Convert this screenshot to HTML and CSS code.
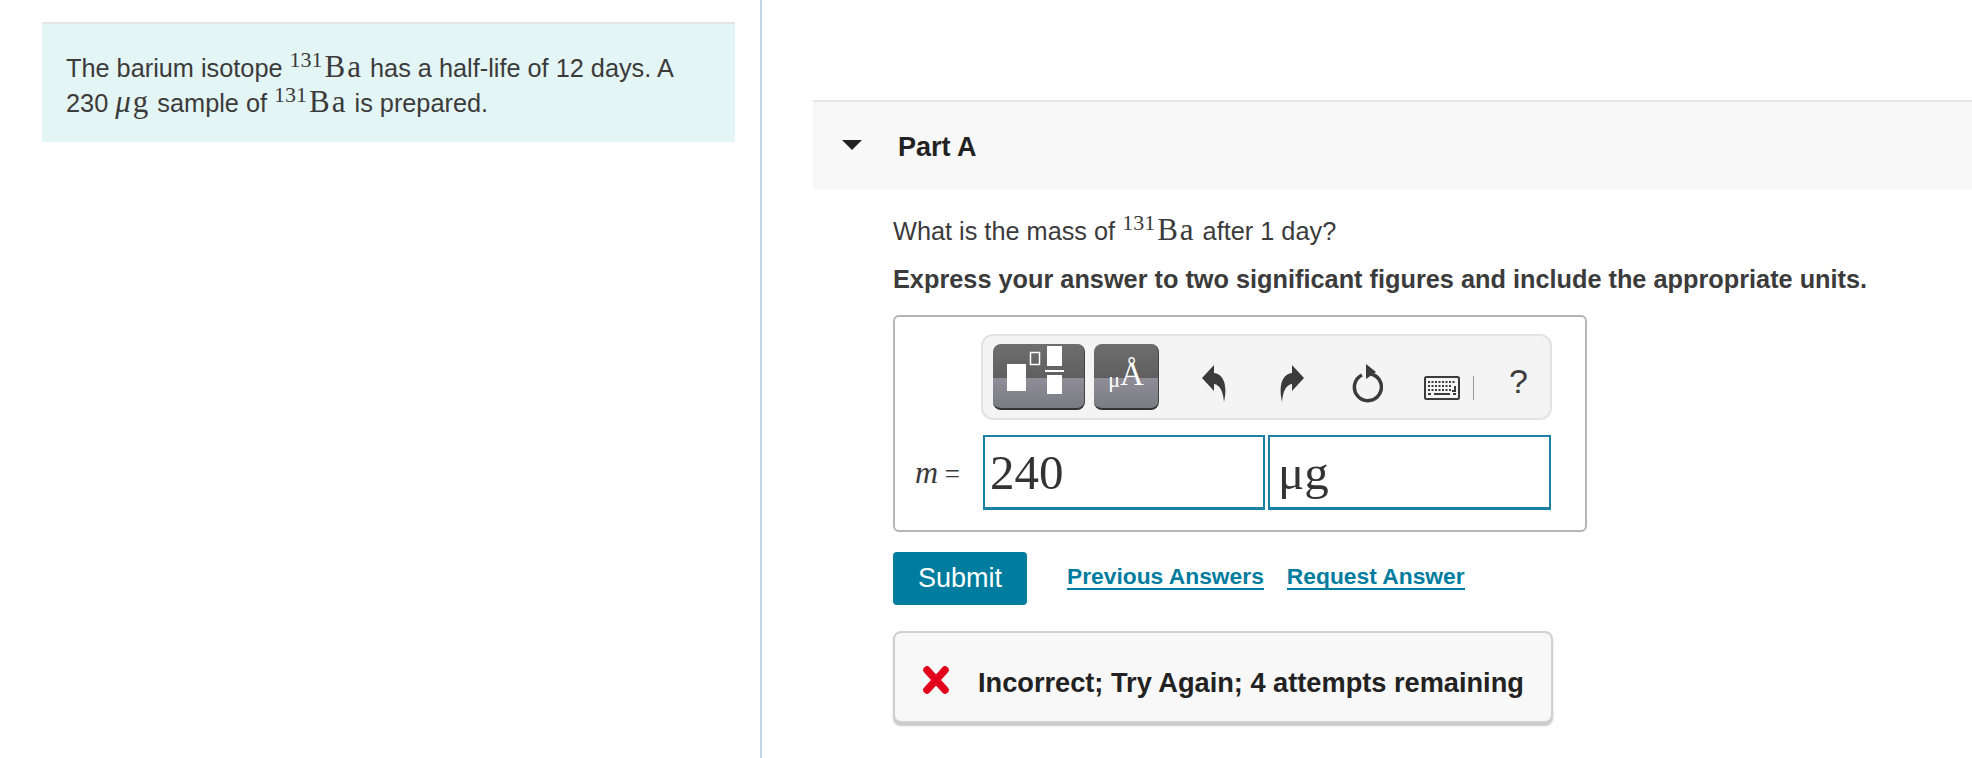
FILE: index.html
```html
<!DOCTYPE html>
<html lang="en">
<head>
  <meta charset="UTF-8">
  <title>Part A</title>
  <link rel="stylesheet" href="styles.css">
</head>
<body>
  <div class="page">
    <div class="left-col">
      <div class="intro">
        The barium isotope <span class="math"><sup>131</sup>Ba</span> has a half-life of 12 days. A
        230 <span class="math"><i>μ</i>g</span> sample of <span class="math"><sup>131</sup>Ba</span> is prepared.
      </div>
    </div>

    <div class="right-col">
      <div class="part-head">
        <span class="arrow"></span>
        <h3>Part A</h3>
      </div>

      <div class="part-body">
        <p class="question">What is the mass of <span class="math"><sup>131</sup>Ba</span> after 1 day?</p>
        <p class="instruction">Express your answer to two significant figures and include the appropriate units.</p>

        <div class="answer-box">
          <div class="toolbar">
            <div class="tool-btn tool-templates">
              <svg width="91" height="64" viewBox="0 0 91 64">
                <rect x="14" y="20" width="19" height="27" fill="#fff"/>
                <rect x="37.500" y="8.500" width="9" height="12" fill="none" stroke="#fff" stroke-width="1.500"/>
                <rect x="54" y="2" width="15" height="20" fill="#fff"/>
                <rect x="52" y="26" width="19" height="2" fill="#fff"/>
                <rect x="54" y="31" width="15" height="19" fill="#fff"/>
              </svg>
            </div>
            <div class="tool-btn tool-symbols"><span class="mu">μ</span><span class="ang">Å</span></div>

            <svg class="tool-icon undo" width="26" height="40" viewBox="0 0 26 40">
              <path fill="#3b3b3b" d="M1 14 L13 1 L13 9 C22 10 27 20 23 38 C22 27 19 21 13 20 L13 27 Z"/>
            </svg>
            <svg class="tool-icon redo" width="26" height="40" viewBox="0 0 26 40">
              <path fill="#3b3b3b" d="M25 14 L13 1 L13 9 C4 10 -1 20 3 38 C4 27 7 21 13 20 L13 27 Z"/>
            </svg>
            <svg class="tool-icon reset" width="32" height="44" viewBox="0 0 32 44">
              <path fill="none" stroke="#3b3b3b" stroke-width="3.500" d="M11 14 A13.500 13.500 0 1 0 20 13"/>
              <path fill="#3b3b3b" d="M15 3 L25 11 L15 18 Z"/>
            </svg>
            <svg class="tool-icon keyboard" width="36" height="24" viewBox="0 0 36 24">
              <rect x="1" y="1" width="34" height="22" rx="1.500" fill="#f4f4f4" stroke="#3b3b3b" stroke-width="2"/>
              <path stroke="#3b3b3b" stroke-width="2" stroke-dasharray="2 1.500" fill="none" d="M4 6 H32 M4 10 H28 M4 14 H28"/>
              <path stroke="#3b3b3b" stroke-width="2" fill="none" d="M10 18 H26 M31 10 V15 H28 M4 18 H7 M29 18 H32"/>
            </svg>
            <span class="tool-sep"></span>
            <span class="tool-help">?</span>
          </div>

          <div class="input-row">
            <span class="var-label"><i>m</i> =</span>
            <div class="answer-input">240</div>
            <div class="answer-input">μg</div>
          </div>
        </div>

        <div class="actions">
          <button class="submit" type="button">Submit</button>
          <a class="link first" href="#">Previous Answers</a>
          <a class="link" href="#">Request Answer</a>
        </div>

        <div class="feedback">
          <svg width="28" height="28" viewBox="0 0 28 28">
            <path fill="none" stroke="#e2001a" stroke-width="7.500" stroke-linecap="round" d="M5 4 L23 24 M23 4 L5 24"/>
          </svg>
          <span>Incorrect; Try Again; 4 attempts remaining</span>
        </div>
      </div>
    </div>
  </div>
</body>
</html>
```

FILE: styles.css
```css
* {
  box-sizing: border-box;
}
html, body {
  margin: 0;
  height: 100%;
  overflow: hidden;
}
body {
  font-family: "Liberation Sans", Arial, sans-serif;
  font-size: 25.300px;
  color: #3b3b3b;
  background: #fff;
}
.page {
  display: flex;
  height: 758px;
}
.left-col {
  width: 762px;
  padding: 22px 0 0 42px;
  border-right: 2px solid #c5d8ea;
}
.intro {
  width: 693px;
  height: 120px;
  padding: 26px 24px 0;
  line-height: 34px;
  background: #e4f5f5;
  border-top: 2px solid #e4e4e4;
}
.math {
  font-family: "Liberation Serif", serif;
  font-size: 31px;
  letter-spacing: 2px;
}
.math sup {
  font-size: 22px;
  line-height: 0;
  vertical-align: 10px;
  letter-spacing: 0;
  margin-right: 2px;
}
.right-col {
  flex: 1;
  padding-top: 100px;
  padding-left: 51px;
}
.part-head {
  display: flex;
  align-items: center;
  height: 90px;
  padding-left: 28px;
  background: #f8f8f8;
  border-top: 2px solid #e6e6e6;
}
.arrow {
  width: 0;
  height: 0;
  border-left: 10px solid transparent;
  border-right: 10px solid transparent;
  border-top: 10px solid #222;
  margin-left: 1px;
  margin-right: 36px;
  margin-top: -3px;
}
.part-head h3 {
  margin: 2px 0 0;
  font-size: 27px;
  font-weight: bold;
  color: #222;
}
.part-body {
  padding: 22px 0 0 80px;
}
.question {
  margin: 0;
  height: 36px;
  line-height: 36px;
}
.instruction {
  margin: 14px 0 0;
  line-height: 34px;
  font-weight: bold;
}
.answer-box {
  width: 694px;
  height: 217px;
  margin-top: 19px;
  padding: 17px 33px 0 86px;
  border: 2px solid #b5b5b5;
  border-radius: 6px;
}
.toolbar {
  display: flex;
  align-items: center;
  height: 86px;
  padding-left: 10px;
  background: #f4f4f4;
  border: 2px solid #e2e2e2;
  border-radius: 12px;
}
.tool-btn {
  height: 66px;
  border-radius: 8px;
  border-bottom: 2px solid #333;
  border-right: 1px solid #444;
  background: linear-gradient(#6e6e6e 0, #5f5f5f 53%, #8f8e98 53%, #7b7b82 100%);
  color: #fff;
  overflow: hidden;
}
.tool-templates {
  width: 92px;
}
.tool-symbols {
  display: flex;
  justify-content: center;
  align-items: flex-end;
  width: 65px;
  margin-left: 9px;
  padding-bottom: 17px;
  font-family: "Liberation Serif", serif;
  line-height: 1;
}
.mu {
  font-size: 22px;
}
.ang {
  font-size: 33px;
}
.tool-icon {
  flex: none;
}
.undo {
  margin-left: 42px;
  margin-top: 14px;
}
.redo {
  margin-left: 52px;
  margin-top: 14px;
}
.reset {
  margin-left: 46px;
  margin-top: 12px;
}
.keyboard {
  margin-left: 41px;
  margin-top: 22px;
}
.tool-sep {
  width: 1px;
  height: 24px;
  margin: 22px 0 0 13px;
  background: #999;
}
.tool-help {
  margin-left: 35px;
  margin-top: 8px;
  font-size: 34px;
  color: #3b3b3b;
}
.input-row {
  display: flex;
  align-items: center;
  margin-top: 15px;
  margin-left: -66px;
}
.var-label {
  flex: none;
  width: 68px;
  font-family: "Liberation Serif", serif;
  font-size: 27px;
  white-space: nowrap;
}
.var-label i {
  font-size: 32px;
}
.answer-input {
  flex: none;
  width: 282px;
  height: 75px;
  padding: 0 5px;
  margin-right: 3px;
  border: 2px solid #1a80a6;
  border-bottom-width: 3px;
  font-family: "Liberation Serif", serif;
  font-size: 49px;
  line-height: 71px;
  color: #333;
}
.answer-input:last-child {
  width: 283px;
  margin-right: 0;
  padding-left: 8px;
}
.actions {
  display: flex;
  align-items: center;
  margin-top: 20px;
}
.submit {
  width: 134px;
  height: 53px;
  padding: 0;
  border: none;
  border-radius: 4px;
  background: #007c9e;
  color: #fff;
  font-family: inherit;
  font-size: 27px;
}
.link {
  margin-left: 23px;
  margin-top: -2px;
  color: #007c9e;
  font-weight: bold;
  font-size: 22.800px;
  text-decoration: none;
  border-bottom: 2px solid #007c9e;
  line-height: 23px;
}
.link.first {
  margin-left: 40px;
}
.feedback {
  display: flex;
  align-items: center;
  width: 660px;
  height: 92px;
  margin-top: 26px;
  padding: 12px 0 0 27px;
  background: #f8f8f8;
  border: 2px solid #d0d0d0;
  border-radius: 8px;
  box-shadow: 0 3px 2px #c8c8c8;
  font-weight: bold;
  font-size: 27.200px;
  color: #222;
}
.feedback svg {
  margin-right: 28px;
  margin-top: -6px;
}
```
